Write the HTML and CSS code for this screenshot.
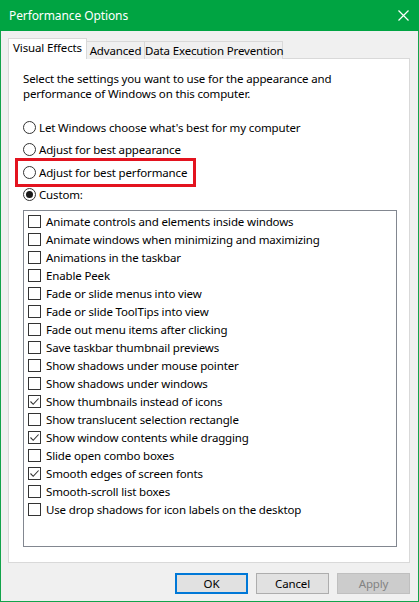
FILE: index.html
```html
<!DOCTYPE html>
<html>
<head>
<meta charset="utf-8">
<link rel="stylesheet" href="styles.css">
</head>
<body>
<div class="window">
  <div class="titlebar">
    <span class="title">Performance Options</span>
    <svg class="close" width="11" height="11" viewBox="0 0 11 11"><path d="M0.5 0.5 L10.5 10.5 M10.5 0.5 L0.5 10.5" stroke="#fff" stroke-width="1.2" fill="none"/></svg>
  </div>
  <div class="content">
    <div class="tabs">
      <div class="tab tab-active">Visual Effects</div>
      <div class="tab tab-adv">Advanced</div>
      <div class="tab tab-dep">Data Execution Prevention</div>
    </div>
    <div class="panel">
      <p class="desc">Select the settings you want to use for the appearance and performance of Windows on this computer.</p>
      <div class="radios">
        <div class="radio-row"><span class="radio"></span>Let Windows choose what's best for my computer</div>
        <div class="radio-row"><span class="radio"></span>Adjust for best appearance</div>
        <div class="radio-row highlight"><span class="radio"></span>Adjust for best performance</div>
        <div class="radio-row"><span class="radio checked"></span>Custom:</div>
      </div>
      <div class="listbox">
        <div class="item"><span class="cb"></span>Animate controls and elements inside windows</div>
        <div class="item"><span class="cb"></span>Animate windows when minimizing and maximizing</div>
        <div class="item"><span class="cb"></span>Animations in the taskbar</div>
        <div class="item"><span class="cb"></span>Enable Peek</div>
        <div class="item"><span class="cb"></span>Fade or slide menus into view</div>
        <div class="item"><span class="cb"></span>Fade or slide ToolTips into view</div>
        <div class="item"><span class="cb"></span>Fade out menu items after clicking</div>
        <div class="item"><span class="cb"></span>Save taskbar thumbnail previews</div>
        <div class="item"><span class="cb"></span>Show shadows under mouse pointer</div>
        <div class="item"><span class="cb"></span>Show shadows under windows</div>
        <div class="item"><span class="cb"><svg viewBox="0 0 11 11" width="11" height="11"><path d="M1.5 5.5 L4.2 8.3 L9.6 2.5" stroke="#333" stroke-width="1.1" fill="none"/></svg></span>Show thumbnails instead of icons</div>
        <div class="item"><span class="cb"></span>Show translucent selection rectangle</div>
        <div class="item"><span class="cb"><svg viewBox="0 0 11 11" width="11" height="11"><path d="M1.5 5.5 L4.2 8.3 L9.6 2.5" stroke="#333" stroke-width="1.1" fill="none"/></svg></span>Show window contents while dragging</div>
        <div class="item"><span class="cb"></span>Slide open combo boxes</div>
        <div class="item"><span class="cb"><svg viewBox="0 0 11 11" width="11" height="11"><path d="M1.5 5.5 L4.2 8.3 L9.6 2.5" stroke="#333" stroke-width="1.1" fill="none"/></svg></span>Smooth edges of screen fonts</div>
        <div class="item"><span class="cb"></span>Smooth-scroll list boxes</div>
        <div class="item"><span class="cb"></span>Use drop shadows for icon labels on the desktop</div>
      </div>
    </div>
    <div class="buttons">
      <button class="btn btn-default">OK</button>
      <button class="btn">Cancel</button>
      <button class="btn btn-disabled">Apply</button>
    </div>
  </div>
</div>
</body>
</html>
```
FILE: styles.css
```css
* { box-sizing: border-box; }
html, body { margin: 0; padding: 0; }
body {
  width: 419px;
  height: 602px;
  font-family: "Noto Sans", "Liberation Sans", sans-serif;
  font-size: 11.5px;
  letter-spacing: -0.15px;
  color: #000;
  background: #f0f0f0;
}
.window {
  width: 419px;
  height: 602px;
  border: 1px solid #12a34a;
  border-top: none;
  display: flex;
  flex-direction: column;
  background: #f0f0f0;
}
.titlebar {
  height: 31px;
  margin: 0 -1px;
  background: #00a442;
  color: #fff;
  display: flex;
  align-items: center;
  justify-content: space-between;
  padding: 0 10px 0 9px;
  flex: none;
}
.title { font-size: 12px; line-height: 16px; letter-spacing: -0.1px; }
.close { display: block; }
.content {
  flex: 1;
  padding: 7px 8px 0 7px;
  display: flex;
  flex-direction: column;
}
.tabs {
  display: flex;
  align-items: flex-end;
  height: 21px;
  margin-bottom: -1px;
  position: relative;
  z-index: 1;
}
.tab {
  height: 18px;
  border: 1px solid #d9d9d9;
  border-bottom: none;
  background: #f0f0f0;
  line-height: 17px;
  text-align: center;
  white-space: nowrap;
}
.tab + .tab { margin-left: -1px; }
.tab-active {
  height: 21px;
  width: 79px;
  background: #fff;
  line-height: 18px;
}
.tab-adv { width: 59px; }
.tab-dep { width: 139px; }
.panel {
  width: 402px;
  height: 505px;
  background: #fff;
  border: 1px solid #d9d9d9;
  padding: 12px 0 0 14px;
}
.desc {
  margin: 0;
  line-height: 15px;
  width: 345px;
}
.radios {
  margin-top: 15px;
  display: flex;
  flex-direction: column;
}
.radio-row {
  height: 22.5px;
  display: flex;
  align-items: center;
  white-space: nowrap;
  width: max-content;
}
.radio {
  width: 13px;
  height: 13px;
  border: 1px solid #333;
  border-radius: 50%;
  margin-right: 3px;
  display: flex;
  align-items: center;
  justify-content: center;
  flex: none;
}
.radio.checked::after {
  content: "";
  width: 7px;
  height: 7px;
  border-radius: 50%;
  background: #1a1a1a;
}
.highlight {
  outline: 3px solid #e3131f;
  outline-offset: 0;
  padding-right: 6px;
  margin-left: -5px;
  padding-left: 5px;
}
.listbox {
  margin-top: 4px;
  width: 374px;
  height: 337px;
  border: 1px solid #828790;
  background: #fff;
  padding: 1px 0 0 4px;
}
.item {
  height: 18px;
  display: flex;
  align-items: center;
  white-space: nowrap;
}
.cb {
  width: 13px;
  height: 13px;
  border: 1px solid #333;
  background: #fff;
  margin-right: 5px;
  flex: none;
  display: flex;
  align-items: center;
  justify-content: center;
}
.cb svg { display: block; }
.buttons {
  display: flex;
  justify-content: flex-end;
  gap: 8px;
  margin-top: 10px;
  padding-right: 0;
}
.btn {
  width: 73px;
  height: 21px;
  font-family: inherit;
  font-size: 11.5px;
  letter-spacing: -0.15px;
  color: #000;
  background: #e1e1e1;
  border: 1px solid #adadad;
  padding: 0;
  line-height: 17px;
}
.btn-default {
  border: 2px solid #0078d7;
}
.btn-disabled {
  background: #cccccc;
  border-color: #bfbfbf;
  color: #838383;
}
```
